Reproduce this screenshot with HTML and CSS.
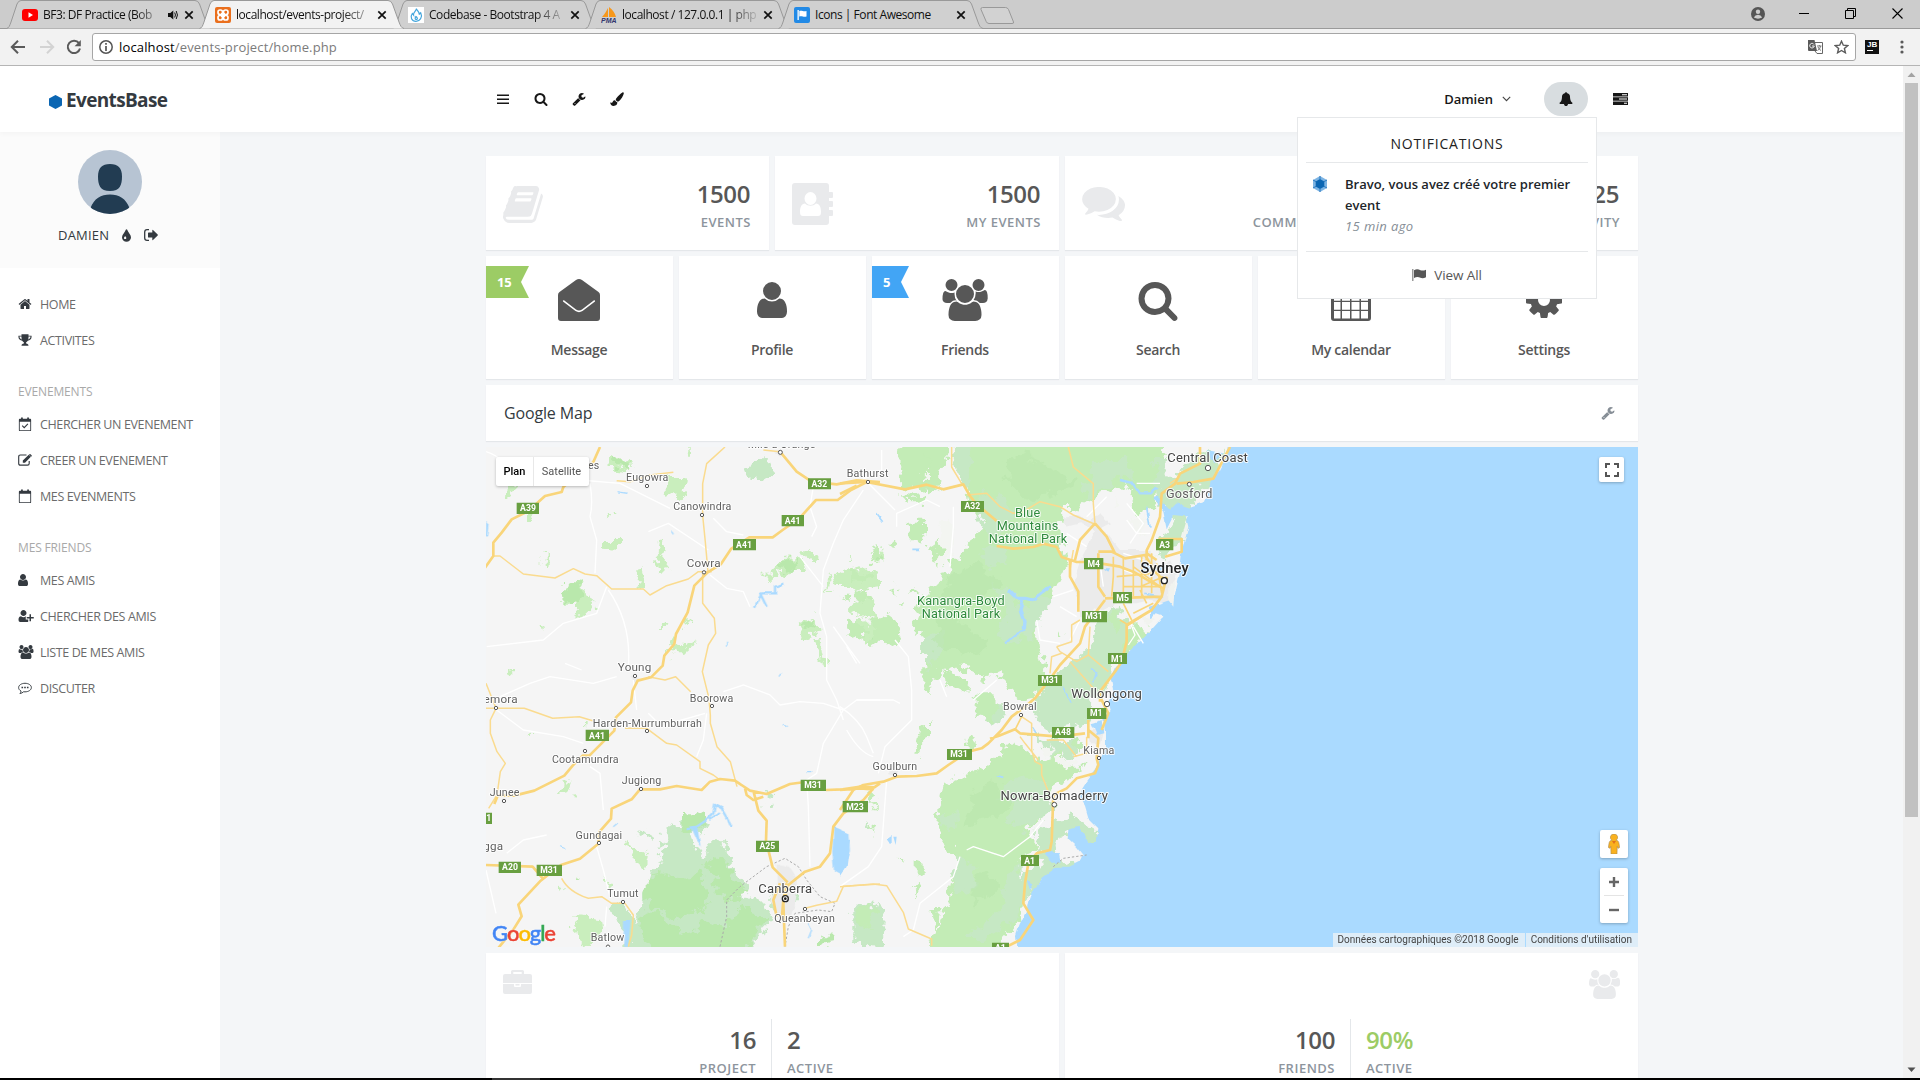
FILE: index.html
```html
<!DOCTYPE html>
<html lang="fr">
<head>
<meta charset="utf-8">
<title>EventsBase</title>
<link rel="stylesheet" href="styles.css">
</head>
<body>
<svg class="sprite" aria-hidden="true">
  <symbol id="bars" viewBox="0 0 1792 1792"><path d="M128 320h1536v192H128zM128 832h1536v192H128zM128 1344h1536v192H128z"/></symbol>
  <symbol id="search" viewBox="0 0 1792 1792"><path d="M1216 832q0-185-131.500-316.500t-316.500-131.500-316.500 131.500-131.500 316.500 131.500 316.500 316.500 131.500 316.500-131.500 131.500-316.500zm512 832q0 52-38 90t-90 38q-54 0-90-38l-343-342q-179 124-399 124-143 0-273.500-55.500t-225-150-150-225-55.500-273.500 55.500-273.500 150-225 225-150 273.500-55.500 273.500 55.500 225 150 150 225 55.500 273.500q0 220-124 399l343 343q37 37 37 90z"/></symbol>
  <symbol id="wrench" viewBox="0 0 1792 1792"><path d="M448 1472q0-26-19-45t-45-19-45 19-19 45 19 45 45 19 45-19 19-45zm644-420l-682 682q-37 37-90 37-52 0-91-37l-106-108q-38-36-38-90 0-53 38-91l681-681q39 98 114.500 173.500t173.500 114.500zm634-435q0 39-23 106-47 134-164.500 217.500t-258.500 83.500q-185 0-316.500-131.500t-131.500-316.500 131.500-316.500 316.500-131.500q58 0 121.500 16.500t107.500 46.500q16 11 16 28t-16 28l-293 169v224l193 107q5-3 79-48.500t135.500-81 70.500-35.500q15 0 23.500 10t8.500 25z"/></symbol>
  <symbol id="brush" viewBox="0 0 16 16"><path d="M14.200 .5c.9-.5 1.800.3 1.500 1.400-.7 2.600-2.800 5.800-4.900 8.200-.8.900-1.500 1.100-2.400.8-.9-.4-1.600-1.200-1.800-2-.1-.7.200-1.200.7-1.900C9.300 4.500 12 1.600 14.200.5zM5.900 9.500c.4 1.200 1.200 2 2.500 2.300.1 2.700-1.600 4.100-4.200 4.100-2.400 0-3.900-1.500-4-4.200 2 1.300 2.500.300 3.100-.9.500-1 1.400-1.500 2.600-1.300z"/></symbol>
  <symbol id="bell" viewBox="0 0 1792 1792"><path d="M1728 1408q0 52-38 90t-90 38h-448q0 106-75 181t-181 75-181-75-75-181h-448q-52 0-90-38t-38-90q50-42 91-88t85-119.500 74.500-158.500 50-206 19.500-260q0-152 117-282.500t307-158.500q-8-19-8-39 0-40 28-68t68-28 68 28 28 68q0 20-8 39 190 28 307 158.500t117 282.500q0 139 19.500 260t50 206 74.500 158.500 85 119.500 91 88z"/></symbol>
  <symbol id="tasks" viewBox="0 0 15 12"><path fill-rule="evenodd" d="M0 0h15v3.400H0zM0 4.300h15v3.400H0zM0 8.600h15V12H0zM9 1.200v1h5v-1zM6 5.500v1h8v-1zM11 9.800v1h3v-1z"/></symbol>
  <symbol id="home" viewBox="0 0 1792 1792"><path d="M1472 992v480q0 26-19 45t-45 19h-384v-384h-256v384h-384q-26 0-45-19t-19-45v-480l1-6 575-474 575 474q1 2 1 6zm223-69l-62 74q-8 9-21 11h-3q-13 0-21-7l-692-577-692 577q-12 8-24 7-13-2-21-11l-62-74q-8-10-7-23.500t11-21.500l719-599q32-26 76-26t76 26l244 204v-195q0-14 9-23t23-9h192q14 0 23 9t9 23v408l219 182q10 8 11 21.500t-7 23.500z"/></symbol>
  <symbol id="trophy" viewBox="0 0 16 16"><path fill-rule="evenodd" d="M4 1.500h8V3h3.500v1.500c0 2.300-2 4-4.300 4.300-.6.800-1.300 1.400-1.900 1.700v1.500c1.700.2 2.700 1 2.700 2.500H4c0-1.500 1-2.300 2.700-2.500v-1.500c-.6-.3-1.300-.9-1.900-1.700C2.500 8.500.5 6.800.5 4.500V3H4zM1.700 4.100c0 1.600 1 2.700 2.600 3.300A9 9 0 0 1 4 4.100zm12.600 0H12a9 9 0 0 1-.3 3.300c1.600-.6 2.600-1.700 2.600-3.300z"/></symbol>
  <symbol id="cal" viewBox="0 0 16 16"><path fill-rule="evenodd" d="M2 2h1.500V.6h2V2h5V.6h2V2H14q1 0 1 1v12q0 1-1 1H2q-1 0-1-1V3q0-1 1-1zm0 3.500V15h12V5.500z"/></symbol>
  <symbol id="calcheck" viewBox="0 0 16 16"><use href="#cal"/><path d="M4.800 9.800l2.300 2.300 4.200-4.300" fill="none" stroke="currentColor" stroke-width="1.300"/></symbol>
  <symbol id="edit" viewBox="0 0 16 16"><path d="M12.800 9v3q0 1.900-1.900 1.900H2.700Q.8 13.900.8 12V4.200q0-1.900 1.900-1.900h7" fill="none" stroke="currentColor" stroke-width="1.300"/><path d="M5.500 8.600l6.800-6.700 2.400 2.400L8 11H5.500zM13 1.300q.7-.6 1.300 0l1.200 1.200q.6.700 0 1.300l-.400.400-2.500-2.500z"/></symbol>
  <symbol id="user" viewBox="0 0 1792 1792"><path d="M1536 1399q0 109-62.500 187t-150.500 78h-854q-88 0-150.500-78t-62.500-187q0-85 8.500-160.500t31.500-152 58.500-131 94-89 134.500-34.500q131 128 313 128t313-128q76 0 134.500 34.500t94 89 58.500 131 31.500 152 8.500 160.500zm-256-887q0 159-112.500 271.500t-271.500 112.500-271.500-112.500-112.500-271.500 112.500-271.500 271.500-112.500 271.500 112.500 112.500 271.500z"/></symbol>
  <symbol id="useradd" viewBox="0 0 2048 1792"><path d="M704 896q-159 0-271.500-112.500T320 512t112.500-271.500T704 128t271.500 112.500T1088 512 975.500 783.500 704 896zm960 128h352v192h-352v352h-192v-352h-352v-192h352V672h192zm-672 320h320v250q-50 70-140 70H280Q64 1664 64 1399q0-479 327-479 131 128 313 128t313-128q30 0 60 8-85 40-85 100z"/></symbol>
  <symbol id="users" viewBox="-64 0 1920 1792"><path d="M529 896q-162 5-265 128h-134q-82 0-138-40.500t-56-118.500q0-353 124-353 6 0 43.500 21t97.500 42.500 119 21.500q67 0 133-23-5 37-5 66 0 159 90 294zm1071 637q0 120-73 189.500t-194 69.500h-874q-121 0-194-69.500t-73-189.500q0-53 3.500-103.500t14-109 26.500-108.500 43-97.500 62-81 85.500-53.500 111.500-20q10 0 43 21.500t73 48 107 48 135 21.500 135-21.500 107-48 73-48 43-21.500q61 0 111.500 20t85.500 53.500 62 81 43 97.500 26.500 108.500 14 109 3.500 103.500zm-1024-1277q0 106-75 181t-181 75-181-75-75-181 75-181 181-75 181 75 75 181zm704 384q0 159-112.500 271.500t-271.500 112.500-271.500-112.500-112.500-271.500 112.500-271.500 271.500-112.500 271.500 112.500 112.500 271.500zm576 225q0 78-56 118.500t-138 40.500h-134q-103-123-265-128 90-135 90-294 0-29-5-66 66 23 133 23 59 0 119-21.500t97.500-42.500 43.500-21q124 0 124 353zm-128-609q0 106-75 181t-181 75-181-75-75-181 75-181 181-75 181 75 75 181z"/></symbol>
  <symbol id="chat" viewBox="0 0 16 16"><path d="M8 2.600c4 0 7.300 2.200 7.300 4.900S12 12.400 8 12.400l-1.600-.1c-1.200 1.200-2.600 1.800-4.200 2 .8-.8 1.200-1.600 1.300-2.800C1.800 10.600.7 9.200.7 7.500.7 4.800 4 2.600 8 2.600z" fill="none" stroke="currentColor" stroke-width="1.100"/><path d="M4 6.700h1.800v1.600H4zM7.100 6.700h1.800v1.600H7.100zM10.200 6.700H12v1.600h-1.800z"/></symbol>
  <symbol id="tint" viewBox="0 0 10 14"><path fill-rule="evenodd" d="M5 0q.6 0 .8.700C6.500 3.500 10 6 10 9a5 5 0 0 1-10 0C0 6 3.500 3.500 4.200.7Q4.400 0 5 0zM2.200 9.700a1.300 1.300 0 1 0 2.600 0c0-.7-.9-1.500-1.300-2.200-.400.700-1.300 1.500-1.300 2.200z"/></symbol>
  <symbol id="signout" viewBox="0 0 14 12"><path d="M5 .700H3Q.7.700.7 3v6q0 2.300 2.300 2.300h2" fill="none" stroke="currentColor" stroke-width="1.300"/><path d="M4 4q0-.6.600-.6h3.700V1.200q0-.8.700-.3l4.700 4.700q.3.400 0 .8L9 11.100q-.7.500-.7-.3V8.600H4.600Q4 8.600 4 8z"/></symbol>
  <symbol id="book" viewBox="64 128 1668 1536"><path d="M1703 478q40 57 18 129l-275 906q-19 64-76.500 107.500t-122.500 43.500h-923q-77 0-148.500-53.500t-99.500-131.500q-24-67-2-127 0-4 3-27t4-37q1-8-3-21.500t-3-19.500q2-11 8-21t16.500-23.500 16.500-23.500q23-38 45-91.500t30-91.500q3-10 .5-30t-.5-28q3-11 17-28t17-23q21-36 42-92t25-90q1-9-2.500-32t.5-28q4-13 22-30.500t22-22.500q19-26 42.500-84.500t27.500-96.500q1-8-3-25.500t-2-26.500q2-8 9-18t18-23 17-21q8-12 16.500-30.500t15-35 16-36 19.500-32 26.500-23.500 36-11.500 47.500 5.500l-1 3q38-9 51-9h761q74 0 114 56t18 130l-274 906q-36 119-71.500 153.500t-128.500 34.500h-869q-27 0-38 15-11 16-1 43 24 70 144 70h923q29 0 56-15.500t35-41.500l300-987q7-22 5-57 38 15 59 43zm-1064 2q-4 13 2 22.500t20 9.500h608q13 0 25.500-9.500t16.500-22.500l21-64q4-13-2-22.500t-20-9.500h-608q-13 0-25.500 9.500t-16.500 22.500zm-83 256q-4 13 2 22.500t20 9.500h608q13 0 25.500-9.500t16.500-22.500l21-64q4-13-2-22.500t-20-9.500h-608q-13 0-25.500 9.500t-16.500 22.500z"/></symbol>
  <symbol id="address" viewBox="0 0 41 42"><path fill-rule="evenodd" d="M3 0h31q3 0 3 3v6h3q1 0 1 1v4q0 1-1 1h-3v3h3q1 0 1 1v4q0 1-1 1h-3v3h3q1 0 1 1v4q0 1-1 1h-3v6q0 3-3 3H3q-3 0-3-3V3q0-3 3-3zm15.500 9a6 6.500 0 1 0 .01 13 6 6.500 0 1 0-.01-13zM13 20.500c-3.500 0-5 4-5 8.500 0 3 1 4 3 4h15c2 0 3-1 3-4 0-4.500-1.500-8.500-5-8.500-3 3-8 3-11 0z"/></symbol>
  <symbol id="comments" viewBox="0 256 1792 1408"><path d="M1408 768q0 139-94 257t-256.500 186.500-353.500 68.500q-86 0-176-16-124 88-278 128-36 9-86 16h-3q-11 0-20.500-8t-11.500-21q-1-13 7-25 30-36 70-80t65-111q-124-72-195-177t-71-224q0-139 94-257t256.500-186.500 353.500-68.500 353.500 68.500 256.500 186.500 94 257zm384 256q0 120-71 224.500t-195 176.500q25 67 65 111t70 80q8 12 6 25-3 14-13 22t-22 7q-50-7-86-16-154-40-278-128-90 16-176 16-271 0-472-132 58 4 88 4 161 0 309-45t264-129q125-92 192-212t67-254q0-77-23-152 129 71 204 178t75 230z"/></symbol>
  <symbol id="envelope" viewBox="0 0 42 42"><path fill-rule="evenodd" d="M0 16Q0 14 1.500 13L18 1q3-2 6 0l16.500 12q1.500 1 1.500 3v23q0 3-3 3H3q-3 0-3-3zm5 6.500Q4.500 21 6 21.200L18 30.500q3 2 6 0l12-9.300q1.400-.2 1 1.400L24.500 32q-3.500 2.300-7 0z"/></symbol>
  <symbol id="calendar" viewBox="0 0 40 42"><path fill-rule="evenodd" d="M3 5h4V0h6v5h14V0h6v5h4q3 0 3 3v31q0 3-3 3H3q-3 0-3-3V8q0-3 3-3zm0 10v6.700h6.500V15zm8 0v6.700h8V15zm9.500 0v6.700h8V15zm9.500 0v6.700h7V15zM3 23v7.700h6.500V23zm8 0v7.700h8V23zm9.500 0v7.700h8V23zm9.500 0v7.700h7V23zM3 32v7.500h6.500V32zm8 0v7.500h8V32zm9.500 0v7.500h8V32zm9.500 0v7.500h7V32z"/></symbol>
  <symbol id="cog" viewBox="0 0 1792 1792"><path d="M1152 896q0-106-75-181t-181-75-181 75-75 181 75 181 181 75 181-75 75-181zm512-109v222q0 12-8 23t-20 13l-185 28q-19 54-39 91 35 50 107 138 10 12 10 25t-9 23q-27 37-99 108t-94 71q-12 0-26-9l-138-108q-44 23-91 38-16 136-29 186-7 28-36 28h-222q-14 0-24.500-8.500t-11.500-21.500l-28-184q-49-16-90-37l-141 107q-10 9-25 9-14 0-25-11-126-114-165-168-7-10-7-23 0-12 8-23 15-21 51-66.500t54-70.500q-27-50-41-99l-183-27q-13-2-21-12.500t-8-23.500v-222q0-12 8-23t19-13l186-28q14-46 39-92-40-57-107-138-10-12-10-24 0-10 9-23 26-36 98.500-107.500t94.500-71.500q13 0 26 10l138 107q44-23 91-38 16-136 29-186 7-28 36-28h222q14 0 24.500 8.500t11.500 21.500l28 184q49 16 90 37l142-107q9-9 24-9 13 0 25 10 129 119 165 170 7 8 7 22 0 12-8 23-15 21-51 66.500t-54 70.500q26 50 41 98l183 28q13 2 21 12.500t8 23.500z"/></symbol>
  <symbol id="briefcase" viewBox="0 0 29 24"><path fill-rule="evenodd" d="M8 4V1.500Q8 0 9.500 0h10Q21 0 21 1.500V4h6q2 0 2 2v7H0V6q0-2 2-2zm2.300 0h8.400V2h-8.400zM0 14h11v2q0 1 1 1h5q1 0 1-1v-2h11v8q0 2-2 2H2q-2 0-2-2zm12.500 0h4v1.500h-4z"/></symbol>
  <symbol id="flag" viewBox="0 0 14 12"><path opacity=".6" d="M0 0h1.500v12H0z"/><path d="M2 1.200C4.500-.2 6.500.3 8.500 1.200c1.800.8 3.500.3 5.500-.5v7.500c-2 1-3.700 1.400-5.500.6C6.500 7.900 4.500 7.600 2 9z"/></symbol>
  <symbol id="close" viewBox="0 0 10 10"><path d="M1.300 1.300l7.400 7.400M8.700 1.300L1.300 8.700" fill="none" stroke="currentColor" stroke-width="1.700"/></symbol>
  <symbol id="tabshape" viewBox="0 0 206 29"><path d="M.5 28.500C3 28 3.500 26 5 22L11 4Q12.500.5 15 .5h174q3 0 4.500 3.500l6.500 18c1.500 4 2.500 6 5 6.500"/></symbol>
</svg>

<header class="browser">
  <div class="tabs">
    <div class="tab"><svg class="shape"><use href="#tabshape"/></svg>
      <svg class="fav" viewBox="0 0 16 16"><rect y="2" width="16" height="12" rx="3" fill="#f00"/><path d="M6.500 5.300v5.400L11 8z" fill="#fff"/></svg>
      <span class="tab-title short fade">BF3: DF Practice (Bob</span>
      <svg class="speaker" viewBox="0 0 10 10"><path d="M0 3h2.300L5.300.5v9L2.300 7H0z"/><path d="M6.700 2.500q1.500 2.500 0 5M8.200 1q2.500 4 0 8" fill="none" stroke="#111"/></svg>
      <svg class="x"><use href="#close"/></svg></div>
    <div class="tab active"><svg class="shape"><use href="#tabshape"/></svg>
      <svg class="fav" viewBox="0 0 16 16"><rect width="16" height="16" rx="2" fill="#ea6f1d"/><rect x="3" y="3" width="4.500" height="4.500" rx="2" fill="none" stroke="#fff" stroke-width="1.700"/><rect x="8.500" y="3" width="4.500" height="4.500" rx="2" fill="none" stroke="#fff" stroke-width="1.700"/><rect x="3" y="8.500" width="4.500" height="4.500" rx="2" fill="none" stroke="#fff" stroke-width="1.700"/><rect x="8.500" y="8.500" width="4.500" height="4.500" rx="2" fill="none" stroke="#fff" stroke-width="1.700"/><path d="M6 6h4v4H6z" fill="#fff"/></svg>
      <span class="tab-title fade">localhost/events-project/</span>
      <svg class="x"><use href="#close"/></svg></div>
    <div class="tab"><svg class="shape"><use href="#tabshape"/></svg>
      <svg class="fav" viewBox="0 0 16 16"><path fill="#fff" d="M0 0h16v16H0z"/><path d="M8.500 1.500c.5 3 3.500 3 2.500 6l1.700-1.700c2 4-.4 8.500-4.700 8.500S1.700 10 4.300 6.500L5.500 8C5 5 8.500 4 8.500 1.500zM8 9.500c-1 1-1.300 3 .3 3s1.200-2-.3-3z" fill="none" stroke="#42a5dc" stroke-width="1.200"/></svg>
      <span class="tab-title fade">Codebase - Bootstrap 4 A</span>
      <svg class="x"><use href="#close"/></svg></div>
    <div class="tab"><svg class="shape"><use href="#tabshape"/></svg>
      <svg class="fav" viewBox="0 0 16 16"><path d="M7 1v9H1c2-2 4-5 6-9zM8 0c4 3 6 6 7 10H8z" fill="#f7981c"/><text x="0" y="15.500" class="pma">PMA</text></svg>
      <span class="tab-title fade">localhost / 127.0.0.1 | php</span>
      <svg class="x"><use href="#close"/></svg></div>
    <div class="tab"><svg class="shape"><use href="#tabshape"/></svg>
      <svg class="fav" viewBox="0 0 16 16"><rect width="16" height="16" rx="2" fill="#228ae6"/><path d="M3.500 3h1.300v10H3.500zM5.300 4c3-1 4 1.200 7.200 0v5.500c-3.200 1-4.200-1-7.200 0z" fill="#fff"/></svg>
      <span class="tab-title">Icons | Font Awesome</span>
      <svg class="x"><use href="#close"/></svg></div>
    <svg class="newtab" viewBox="0 0 36 18"><path d="M2.500.5h23q2 0 3 2l5 12.500q.6 1.500-1.500 1.500H9q-2 0-2.800-2L1 2.500Q.5.500 2.500.5z"/></svg>
    <div class="winctl">
      <svg width="14" height="14" viewBox="0 0 14 14"><circle cx="7" cy="7" r="7" fill="#555"/><circle cx="7" cy="4.700" r="2.200" fill="#ccc"/><path d="M2.800 10.500q1.200-2.700 4.200-2.700t4.200 2.700q-4.200 2.300-8.400 0z" fill="#ccc"/></svg>
      <svg width="10" height="11" viewBox="0 0 10 11"><path d="M0 5.500h10" stroke="#000"/></svg>
      <svg width="11" height="11" viewBox="0 0 11 11"><path d="M.5 2.500h8v8h-8zM2.500 2.500v-2h8v8h-2" fill="none" stroke="#000"/></svg>
      <svg width="11" height="11" viewBox="0 0 11 11"><path d="M.5.500l10 10M10.500.500l-10 10" stroke="#000" stroke-width="1.100"/></svg>
    </div>
  </div>
  <div class="toolbar">
    <svg class="tb" viewBox="0 0 16 16"><path d="M15 8H2.500M8 1.800L1.800 8 8 14.200" fill="none" stroke="#5a5a5a" stroke-width="2"/></svg>
    <svg class="tb" viewBox="0 0 16 16"><path d="M1 8h12.500M8 1.800L14.200 8 8 14.200" fill="none" stroke="#d3d3d3" stroke-width="2"/></svg>
    <svg class="tb" viewBox="0 0 16 16"><path d="M13 4.200A6.200 6.200 0 1 0 14 9.500" fill="none" stroke="#5a5a5a" stroke-width="2"/><path d="M14.800 1v6.200H8.600z" fill="#5a5a5a"/></svg>
    <div class="omnibox">
      <svg width="14" height="14" viewBox="0 0 14 14"><circle cx="7" cy="7" r="6.200" fill="none" stroke="#555" stroke-width="1.500"/><path d="M7 3v1.700M7 6v5" stroke="#555" stroke-width="1.700"/></svg>
      <span class="url">localhost<i>/events-project/home.php</i></span>
      <svg width="15" height="14" viewBox="0 0 15 14"><path d="M7 2.500h7.500v11H9L7 11" fill="none" stroke="#666"/><path d="M0 0h6.500L9 11H1q-1 0-1-1z" fill="#5a5a5a"/><path d="M6 4.500A2.300 2.300 0 1 0 6.300 6H4" stroke="#eee" fill="none"/><path d="M9 6h4.500M11.300 5v1M9.500 10.500q3-1.500 3-4.500M10 7q1 2.500 3 3.500" stroke="#777" fill="none"/></svg>
      <svg width="15" height="14" viewBox="0 0 15 14"><path d="M7.500 1.200l1.800 4 4.400.4-3.300 2.900 1 4.300-3.900-2.300-3.900 2.300 1-4.300L1.300 5.600l4.400-.4z" fill="none" stroke="#5a5a5a" stroke-width="1.400"/></svg>
    </div>
    <div class="jb"><span>JB</span></div>
    <svg class="dots" width="4" height="14" viewBox="0 0 4 14"><circle cx="2" cy="2" r="1.600"/><circle cx="2" cy="7" r="1.600"/><circle cx="2" cy="12" r="1.600"/></svg>
  </div>
</header>

<div class="viewport">
  <div class="page">
    <header class="top">
      <a class="brand"><svg width="13" height="14" viewBox="0 0 13 14"><path d="M6.500 0L13 3.400v7.200L6.500 14 0 10.600V3.400z" fill="#0b66b3"/></svg><span>EventsBase</span></a>
      <div class="top-inner">
        <nav class="tools">
          <svg class="ic"><use href="#bars"/></svg><svg class="ic"><use href="#search"/></svg><svg class="ic"><use href="#wrench"/></svg><svg class="ic"><use href="#brush"/></svg>
        </nav>
        <nav class="account">
          <span class="who">Damien</span>
          <svg class="chev" viewBox="0 0 9 6"><path d="M.8.800l3.700 3.900L8.200.8" fill="none" stroke="#444" stroke-width="1.100"/></svg>
          <span class="bell"><svg class="ic"><use href="#bell"/></svg></span>
          <svg class="tasks"><use href="#tasks"/></svg>
          <div class="menu">
            <h5>NOTIFICATIONS</h5>
            <div class="note">
              <svg width="14" height="16" viewBox="0 0 14 16"><path d="M7 0l7 4v8l-7 4-7-4V4z" fill="#7db4e3"/><path d="M7 3l4.300 2.500v5L7 13l-4.300-2.500v-5z" fill="#0b66b3"/><path d="M7 0v3M0 4l3 1.600M14 4l-3 1.600M0 12l3-1.600M14 12l-3-1.600M7 16v-3" stroke="#2a79c0"/></svg>
              <div><p>Bravo, vous avez créé votre premier event</p><em>15 min ago</em></div>
            </div>
            <a class="viewall"><svg width="14" height="12"><use href="#flag"/></svg>View All</a>
          </div>
        </nav>
      </div>
    </header>
    <div class="body">
      <aside class="side">
        <div class="me">
          <svg width="64" height="64" viewBox="0 0 64 64"><clipPath id="round"><circle cx="32" cy="32" r="32"/></clipPath><g clip-path="url(#round)"><path fill="#b7c4d3" d="M0 0h64v64H0z"/><path d="M32 14c8 0 12 4 12 12.500S42 41 32 41s-12-6-12-14.500S24 14 32 14zM32 44.500c9 0 16 4 19.500 13.500V66h-39v-8C16 48.500 23 44.500 32 44.500z" fill="#223c52"/></g></svg>
          <div class="me-row"><span>DAMIEN</span><svg class="drop"><use href="#tint"/></svg><svg class="out"><use href="#signout"/></svg></div>
        </div>
        <nav class="nav">
          <a><svg><use href="#home"/></svg>HOME</a>
          <a><svg><use href="#trophy"/></svg>ACTIVITES</a>
          <h6>EVENEMENTS</h6>
          <a><svg><use href="#calcheck"/></svg>CHERCHER UN EVENEMENT</a>
          <a><svg><use href="#edit"/></svg>CREER UN EVENEMENT</a>
          <a><svg><use href="#cal"/></svg>MES EVENMENTS</a>
          <h6>MES FRIENDS</h6>
          <a><svg class="solo"><use href="#user"/></svg>MES AMIS</a>
          <a><svg class="wide"><use href="#useradd"/></svg>CHERCHER DES AMIS</a>
          <a><svg class="wide"><use href="#users"/></svg>LISTE DE MES AMIS</a>
          <a><svg><use href="#chat"/></svg>DISCUTER</a>
        </nav>
      </aside>
      <main class="main">
        <section class="stats">
          <div class="card stat"><svg width="40" height="37"><use href="#book"/></svg><div><b>1500</b><span>EVENTS</span></div></div>
          <div class="card stat"><svg width="41" height="42"><use href="#address"/></svg><div><b>1500</b><span>MY EVENTS</span></div></div>
          <div class="card stat"><svg width="43" height="34"><use href="#comments"/></svg><div><b>15</b><span>COMMENTS</span></div></div>
          <div class="card stat"><div><b>25</b><span>ACTIVITY</span></div></div>
        </section>
        <section class="tiles">
          <div class="card tile"><span class="ribbon green">15</span><svg><use href="#envelope"/></svg><p>Message</p></div>
          <div class="card tile"><svg><use href="#user"/></svg><p>Profile</p></div>
          <div class="card tile"><span class="ribbon blue">5</span><svg class="w46"><use href="#users"/></svg><p>Friends</p></div>
          <div class="card tile"><svg><use href="#search"/></svg><p>Search</p></div>
          <div class="card tile"><svg><use href="#calendar"/></svg><p>My calendar</p></div>
          <div class="card tile"><svg><use href="#cog"/></svg><p>Settings</p></div>
        </section>
        <section class="card map-head"><h3>Google Map</h3><svg><use href="#wrench"/></svg></section>
        <section class="map">
<svg class="map-art" width="1152" height="500" viewBox="0 0 1152 500">
<defs>
<filter id="rough" x="-5%" y="-5%" width="110%" height="110%"><feTurbulence type="fractalNoise" baseFrequency=".09" numOctaves="4" seed="4"/><feDisplacementMap in="SourceGraphic" scale="20" xChannelSelector="R" yChannelSelector="G"/></filter>
<filter id="wobble" x="-5%" y="-5%" width="110%" height="110%"><feTurbulence type="fractalNoise" baseFrequency=".09" numOctaves="2" seed="9"/><feDisplacementMap in="SourceGraphic" scale="5" xChannelSelector="R" yChannelSelector="G"/></filter>
</defs>
<path fill="#f5f5f5" d="M0 0h1152v500H0z"/>
<!-- forests and parks -->
<g filter="url(#rough)">
<g transform="scale(.33333) translate(-18 -21)">
<g fill="#c9eebd">
<path d="M390 55l50 0 8 45-35-5-25-18zM620 25h22v28h-20zM560 105l60 0 0 40-25 30-35-10zM80 145l20-5 0 28-22 0zM135 215h22v20h-22zM380 215l22 15-20 8zM378 300l36 0 0 32-36-3zM188 345h12v32h-12zM540 305l16 0-8 60 20 25-30 4-5-50zM490 375l10 40-10 20-25-30zM248 440l50-10 20 45 35 20-10 28-50-3-10-40-30 10zM185 560l15-10 0 15-15 5zM535 545l30 0-5 25-20 0zM580 595l30 20 40-15-15 20-35 10-35 20zM610 540l15-10-5 30zM135 880l15-6 0 15zM315 840h14v16h-14zM245 1020l30 5-5 40-30-5zM1040 415l15 0-10 45zM1000 600l30 0 10 70-25-15zM80 690h22v10H85z"/>
<path d="M860 380l40 0-10 30-30 0zM900 355l60-5 15 40-40 0-15 15-20-5zM975 340l40 0 0 25-30-5zM1160 340l50-10 0 40-40-5zM1065 410l45-25 40-5 50 30 0 35-60 5-30-15-40 0zM1120 490l60-10 20 60-60-10-30-15zM1130 540l20 40 10 30 20-20 20 10-5-50zM955 555l45-30 10 55-40 20zM1095 360l12-15 0 15zM440 1210l60 35-10 40-30-30zM280 1430l80 10 10 50-70 30-10-50zM370 1320l15 10-5 15zM225 1330l25 10-5 15-20-5zM285 1298l15 5-8 8z"/>
</g>
<path fill="#b9e8ac" d="M395 52l45 10 5 25-30 0zM250 440l45-8 10 35-15 20-35 0zM900 360l55-5-10 30-25 10zM1165 340l40 0 0 20-35 5zM960 560l35-25 10 35zM285 1300l18 4-10 8zM1170 590l25 0 0 25z"/>
<path fill="#c6e8c4" d="M800 75l40-25 35 25 0 35-25 20-35-15zM560 1170l50-30 50-20 30 40-60 20 10 50-60 20-30-30zM475 1180l40 5-5 20zM400 1400l30-20 30 60 30-50 30-100 50-80 70 0 40 60 60 0 60 60-20 60-60 40-60 80 0 1 20 0 0 30-230 0zM680 1210l60 0 20 50-20 20 20 60 70 40 40 20-20 80-40 60-150 0-10-100 40-60-10-60-40-50 40-30zM1120 1410l80-20 0 130-80-20zM860 1050l30 20-30 20zM870 1350l60-5 20 50-60 20zM1160 1130l15 40-20 0z"/>
<path fill="#b9e8ac" d="M600 1120l60 0 20 30-50 20-30-10zM500 1320l50-20 60 10 50-10 30 60-20 50-70 30-60-30-40-20zM470 1430l60-20 60 60 40 10 40-40 60 20 60-60 60 40-30 80-60 30-240 0zM700 1250l40 10 20 60 40 30-30 40-60-20 0-50-30-30zM1020 1500l40-20 0 35-40 5z"/>
</g>
<g transform="scale(.33333) translate(1062 -21)">
<path fill="#c3ecb6" d="M185 0l140 0 0 60-30 30 0 50-110 10-5-60zM340 0l620 0 25 30-25 60-10 100-50 30-30-70-20-20-60 30-50 20-40 30-35 0-5 40 5 70 25 40-25 40-25 50-40 70-10 40 10 80 20 80-30 50-50 5-40-35-30-40-40 20-50-30-40-10-40 10-35 70-15-20 0-140-25-40 15-80 40-40 50-40 10-40 60-60 40-60-40-30-10-50-10-70-30-10z"/>
<path fill="#c6e8c4" d="M335 0l45 0 15 70-15 80-35-70zM430 160l40 0 60 70-60 60-30-20-30-60zM760 60l90 0 40 60-50-10-50 40-60 20zM450 430l60 20 60 90-40 70-60-20 30-60-20-60zM570 480l60-20-20 60-30 80-40-20zM250 590l60-20 20 40-60 80-20-20zM420 330l60-10 20 40-60 20zM940 60l40 0 0 60 60-50 40-30 70 0-20 60-20 30-40 40-30 60 30 30-10 40-60 20-30 50-20-40 50-100-40-40z"/>
<path fill="#c6e8c4" d="M770 530l60-30 40 60-15 80-25 50-30 50-40 30-20 80-100 20-50-20 10-90 50-60 50-30 50-50z"/>
<path fill="#c3ecb6" d="M870 560l82 5-82 75-20 0zM800 530l30-20 20 40-20 30zM520 900l40 30 40 30 50-20 50 40 40 0-60 40-60 40-5 60-50 60 30 50-50 20-15 100 25 60-70 90-20 60-210 0 60-150 20-80 20-70-70-90 30-140 110-40z"/>
<path fill="#c6e8c4" d="M540 1000l80 30 20 70-80 70-60-20 30-60-60-20zM300 1130l50-10 0 40-50-5zM350 1240l60 40-10 60-60 30zM690 1120l50 40 35 20-6 36-30 5-35-36-46 10-10 60 50 10 30 10-8 20-50 20-60 0-50 60-20 0 10-80 50-10-10-110zM500 1300l45-20 0 60 20 50-60 60-70 50-60 0 60-60 50-40zM60 1410l60-30 20 90-60 60-20 0zM450 790l50 0-10 60-60-10zM560 880l60 20 100 0-20 50-70 0z"/>
<path fill="#c3ecb6" d="M180 165l60 10 20-5-10 20-50-5zM200 245l55 0 0 50-45 0zM85 330l25-15 5 45-25 10zM140 305l30 0-10 20zM30 385l60 20 0 20-60-5zM50 450l40 10-5 30-35-10zM10 540l50 10 20 30-60 20zM90 540l50-15 40 30-10 60-70-5zM210 460l20-15 5 30zM150 450l15-10 5 30zM410 760l60 0-10 80-50-10zM380 890l30 5 0 30-30 0zM240 870l30-20 0 40-30 60-20 0zM80 1060l25 0-5 40zM230 1270l30 10 0 30-30-10zM45 1420l60-30-10 60-40 10zM165 1255l20-5 5 25zM215 1350l20-20 0 40zM90 1150l10 0 0 40zM700 910l25-10 10 20-20 20zM270 1410l30 0-10 60zM270 320l30-20 10 20-10 60zM655 585l12-15 3 15zM300 690l50 10 50 40-20 20-60-30zM180 490l14-10 0 25zM5 470l20-10 5 20zM265 50l30 20 10 80-40 20z"/>
<path fill="#b9e6ab" opacity=".6" d="M500 60l60-20 90 60 70 20-60 30-100 30-60-60zM340 400l70-30 80 60-60 40-80 40-60-10zM300 520l80 40 70 60-60 20-110-20zM400 1060l60-30 60 50-60 60-90 20zM380 1340l60-40 50 40-80 60z"/>
<path fill="#f3f5f1" d="M300 240l40 10 0 60-20 60-25-10 10-60zM255 90l15 0 0 30-18 0zM870 230l40 0 0 60-30-20zM820 170l20 30-20 20zM600 910l40 10 0 20-40 0zM650 960l60 0 0 15-50 5z"/>
</g>
</g>
<!-- built-up areas -->
<g fill="#ebebeb" filter="url(#wobble)"><g transform="scale(.33333) translate(1062 -21)">
<path d="M770 260l30 20 40 50 90 0 30 60 30-30 20 40-20 90-60-10-40 10-60 0-40 20-60-10-30-60 20-80zM700 440l60-20 20 60-50 30zM720 480l50 0-20 60-30-10zM670 230l40-5 40 15 30-20 30 30-40 20-50-20-40 10zM740 870l50 0-10 40-30 0z"/><path d="M145 975l30 0 0 30-30-5z"/></g>
<g transform="scale(.33333) translate(-18 -21)"><path d="M890 1270l40 10 20 30 0 60-20 60-40-10-20-40 20-40zM450 705l30 10-10 25zM885 35l25 5-10 15z"/></g></g>
<!-- ocean, bays and lakes -->
<g fill="#aadaff" filter="url(#wobble)">
<g transform="scale(.33333) translate(1062 -21)">
<path d="M1170 0l-10 50-20 40-20 20-10 35-15 40-45 15-8 40-2 35-14 60-6 60-15 70-15 50-25 20-13 15-32 35-40 40-30 30-25 30-13 30 8 40-15 30 7 28-22 22 5 40 0 50-25 60-30 40-25 40 20 35 10 35 30 30-5 40-25 5-12-30-15-20-30 10-2 30 22 20 20 25-10 20-30 15-40 0-40 30-10 20-20 20-10 25-10 40-20 40-10 30 5 50h1900V0z"/>
<path d="M950 170l40 40 20-20 60 20-20 20-50-5-20 40-10-50-30-40zM1100 30l50 10-30 30zM930 500l60-20 10 20-20 30-30-10-20 20zM900 360l30 20 50 0-10 10-60 0zM755 850l30-10 5 40-20 5zM620 1235l40 5 5 25-30 0-20-20zM560 1320l20 10-10 20zM0 1190l30 10-10 80-20 30zM140 1195l15-10 0 30zM160 1190l10 0-3 25zM790 385l20 0-5 10z"/>
<path fill="none" stroke="#aadaff" stroke-width="10" d="M505 450l25 25 30 0 20 5 50-40M548 480l-8 30 12 35-2 20"/>
<path fill="none" stroke="#aadaff" stroke-width="7" d="M555 565l-35 25-25 20M840 120l40 10 20 30 30 0 20-20"/>
<path fill="none" stroke="#aadaff" stroke-width="5" d="M750 685l20 15-10 30M670 740l20 50M110 220l18 22M217 328h22M580 865l10 15M470 1010l20 5M970 470l-60-10M920 200l10 60"/>
</g>
<g transform="scale(.33333) translate(-18 -21)">
<path d="M18 245l8 5-4 40-6 5zM1060 1160l45 20 5 50-30 75-18-10-5-60zM432 1440l20 0-8 80-14 0zM635 1165l20-5 10 60-15-20z"/>
<path fill="none" stroke="#aadaff" stroke-width="7" d="M825 500l20-40 40 0 0-20 25-10M840 460l20 40M620 1165l30-5 30-20 20-20 5-25 20 10 20 35 10 25M690 1140l30-20"/>
<path fill="none" stroke="#aadaff" stroke-width="4" d="M410 155l35 5M575 275l5 8M905 695l-8 12M740 605v12M238 1220l15 5M980 998h14M912 856l8 4M400 1160l12-10M985 1450l10 20-10 25"/>
</g></g>
<!-- headlands lying off the coast -->
<g fill="#f1f3ef" filter="url(#wobble)"><path transform="scale(.33333) translate(1062 -21)" d="M1040 240l5 20-10 40-12 0zM985 440l20-20-5 80-15-20zM900 530l50 10-30 15z"/></g>
<!-- local roads -->
<g fill="none" stroke="#fff" stroke-width="4" stroke-linejoin="round">
<g transform="scale(.33333) translate(-18 -21)">
<path d="M18 35q60 20 70 70M330 130q10 60 0 100l20 70-5 100M300 120l120 10 60 30 60 30 30 15M700 235l40 40 50 10M505 275l60-25 120 80M690 405l50 40 50 10 20 45M380 440l-30 80-100 30-60 50-170 20M385 450q70 100 60 230M60 770l90-40 60-20 130 20 70-20M255 670l50 20M460 720l10 90M505 820l40 40 60-20 70-20M50 810l80 60 120 20 60 20M330 980l30 20 10 110M680 820l-10 80-20 50M1200 780h-70l-40 30-60-20-70-5-60 10-30-30-80-30-60 20M1090 810l-60 100-20 90-30 20 5 80 5 180M1100 870q40 70 80 80M1000 140l-10 60 20 60-15 30M1150 150l-60 90-30 70-30 80-10 130 20 70 0 130 30 60 20 60M1060 560l50 70 30 40M960 350l70 90M18 1290l30 130M80 1240l50-40 70-15M350 1220l20 70 20 80M380 1400l-5 60"/>
</g>
<g transform="scale(.33333) translate(1062 -21)">
<path d="M85 130l80 80M125 30v60l-60 30M300 200l-40-20-90 40 0 40M340 200l0 60-10 120M165 600l40 50 10 100 0 90-80 80-20 80M50 780h110l20 10M0 800q60 40 80 90l20 50M20 620l30 50M140 1020l-15 200-40 60-85 60M300 720l20 50M380 1230l20-10 90 30 80-60 40-50M860 190l50 60-40 60M800 170l-60 60M720 540l-30 60M470 720l-70 60M880 560l30 50M590 540l10 60 60 10M360 1250l-20 60-100 80-20 80-30 20M960 130l-70 0M870 545l15 40-20 30"/>
<path d="M860 240l30 40 40 0M680 280l60 40M640 470l60-20M660 500l50 30M850 340l60 20M930 420l-80-30M790 440l-10-70"/>
</g></g>
<g fill="none" stroke="#aaa" stroke-width="3" stroke-dasharray="7 6"><path transform="scale(.33333) translate(-18 -21)" d="M720 1520l20-90 0-50 40-40 80-60 55-25 40 25 25 40 40 50 45 20-10 25-40-5-70 10-20 40-10 60"/><path transform="scale(.33333) translate(1062 -21)" d="M640 1280l30-25 70-10"/></g>
<!-- secondary roads -->
<g fill="none" stroke="#fadb8f" stroke-width="4.500" stroke-linejoin="round">
<g transform="scale(.33333) translate(-18 -21)">
<path d="M735 21l-55 50-12 60 0 95 8 80 8 90M40 348h20l70 54 95 12 55-28 35 16 35 5 45 40 95 0 20 18 50-28 65-20 30-22h40M668 400l0 90 35 45 4 45-22 35-18 80 20 80 4 50 0 25 20 70 40 45 20 75M505 710l50 10 32-10 45 45M18 805h115l85 30 80-5 40 12M435 865h65l60 45 30 5 70 50 0 20 40 20 20 15M18 730l30 75-17 35 0 40 20 55 25 35-15 25-10 70-25 40M245 1315q20 40 80 60l40-5 30 20 40 0 25 35-5 60-10 35M410 122l40 3 60-20 70-8M1200 1332l-110 7-20 45-60 12-40 10M850 30l50 5"/>
</g>
<g transform="scale(.33333) translate(1062 -21)">
<path d="M685 21l15 60 60 50 0 60 5 60M335 21l0 60 30 50M380 165l60-5 40 40 40 20 30-5 50-30 60 15 40 25 70 30M700 330l-10 60M720 540l-25 15 0 50-45 15M750 560l-5 85 60 50M650 620l10 15 50 30 35-20M690 665l70 80M630 700l5-50 30-10M545 830l30 20 0 80 10 35 20 10 0 30 20 50M540 890l15 20 40 50M620 900l50 0 40 50M0 1340l100-8 40 5 50 80 15 50 70 30 0 20M740 890l0 50-40 10M1020 110l-30 20"/>
</g></g>
<!-- highways -->
<g fill="none" stroke="#f9d57a" stroke-width="8" stroke-linejoin="round">
<g transform="scale(.33333) translate(-18 -21)">
<path d="M360 21l-20 45-90 75-5 15-50 12-50 45-50 25-30 40-25 30 0 40-25 35M900 35l50 60 45 30 75 8 60-12 70 5M1163 125l-50 25-40 30h-65l-50 55-50 35-30 22h-70l-55 35-30 45-40 25-40 40-20 80-35 65-5 30-30 35-5 30-35 35-40 10-15 30-5 35-45 45-5 40-45 45-30 30-20 0-30 30-25 30-90 45-60 15h-50l-10 25M480 1048h60l50-10 75 12 25-25 30-8 45 5 45 30 50 10 70-30 45-6h35M1038 1050l50-2 55-8 40 2 17-12M480 1048l-25 30-60 28-2 30-35 40-3 35-55 45-55 18-40 30-25 20-65 70 10 35-25 40-45 55-5 30M18 1275l140 5 30 35M820 1052l15 60 25 30-2 60 20 80 45 45M1180 1045l-30 35-60 40-30 40-10 80-30 40-45 15-50 40-15 55 5 130M900 1330l-20 50 10 50M920 1330l-10 50-5 60M795 1045l5 20 20 15 30-10"/>
</g>
<g transform="scale(.33333) translate(1062 -21)">
<path d="M0 130l80-4 115 22 65-14 50 14 60-15 20 35 20 25 60 50M470 318l50 8 60-5 30-10 40 10 15 30 45 15 70 0M0 162l50-25M780 370l60 10 40 15 60 35 30 15M1080 21l0 50-60 30-15 30-40 30-5 70-25 70-15 30 0 30M1170 21l-50 95-60 10-50 5M765 250l35 40 25 50M765 250l-45 50-15 60M690 360l0 50 25 45 0 60M775 340l0 100 20 30M775 335l40 0 40 20 60-10 30 50 30 30M975 350l50-15 0-38-70 0M920 340l30 20M795 475l170-5 15-60M795 480l-60 80-15 50-60 65-25 35-50 65-30 25-40 30-30 40-40 40-20 15-40 10-60 40-35 25-60 8-60 2-40 15-60 10-30 15-20 30-20 30M0 1050l60-5 40 3M965 470l-30 40-75 45 0 50-15 60-20 30-45 60 0 30M745 840l0 55M735 880l-80 10-115-10-15-12-50 20-25 8M745 870l30 25-5 60 5 20-10 25-55 15-30 30-40 20-5 140-5 25-40 10-25 30-10 60-5 60 30 50-40 60-40 20-5 50M780 770l25 50-20 50"/>
<path stroke-width="5" d="M820 350v60l-5 60M850 350l0 120M880 360v110M905 350v120M830 410l110-10M850 440l110 0M880 380l80 60M900 440l70-30M850 490l30 60M880 520l60-30M840 540l25 15 40-25M920 490l-20-40M950 370l15 90M935 340l0 120M525 870l20-40"/>
</g></g>
<!-- towns -->
<g fill="#fff" stroke="#555" stroke-width="3">
<g transform="scale(.33333) translate(-18 -21)"><circle cx="901" cy="37" r="6"/><circle cx="501" cy="138" r="5"/><circle cx="666" cy="225" r="5"/><circle cx="672" cy="397" r="5"/><circle cx="465" cy="708" r="5"/><circle cx="48" cy="804" r="5"/><circle cx="696" cy="798" r="5"/><circle cx="501" cy="873" r="5"/><circle cx="315" cy="933" r="5"/><circle cx="483" cy="1047" r="5"/><circle cx="72" cy="1083" r="5"/><circle cx="357" cy="1209" r="5"/><circle cx="429" cy="1386" r="5"/><circle cx="384" cy="1520" r="5"/><circle cx="975" cy="1407" r="5"/><circle cx="916" cy="1376" r="9" stroke="#222" stroke-width="4"/><circle cx="916" cy="1376" r="4" fill="#222" stroke="none"/></g>
<g transform="scale(.33333) translate(1062 -21)"><circle cx="84" cy="126" r="5"/><circle cx="1104" cy="84" r="8"/><circle cx="1048" cy="133" r="6"/><circle cx="973" cy="422" r="9" stroke="#222" stroke-width="4"/><circle cx="801" cy="792" r="8"/><circle cx="543" cy="825" r="5"/><circle cx="777" cy="954" r="5"/><circle cx="643" cy="1094" r="7"/><circle cx="165" cy="1005" r="5"/></g></g>
<!-- road shields -->
<g class="shields"><g transform="scale(.33333) translate(-18 -21)">
<path d="M984 115h69v33h-69zM110 188h67v34h-67zM905 225h67v34h-67zM759 297h69v34h-69zM317 869h70v34h-70zM962 1019h76v34h-76zM1088 1083h76v34h-76zM828 1202h69v34h-69zM56 1265h67v34H56zM170 1274h76v34h-76zM0 1118h36v34H0z"/>
<text x="1018" y="141">A32</text><text x="144" y="214">A39</text><text x="938" y="251">A41</text><text x="792" y="324">A41</text><text x="351" y="896">A41</text><text x="999" y="1045">M31</text><text x="1125" y="1109">M23</text><text x="862" y="1228">A25</text><text x="90" y="1291">A20</text><text x="207" y="1299">M31</text><text x="26" y="1144">1</text></g>
<g transform="scale(.33333) translate(1062 -21)">
<path d="M363 183h69v33h-69zM948 297h52v34h-52zM732 354h58v34h-58zM819 456h57v34h-57zM726 513h75v34h-75zM804 639h57v33h-57zM594 705h72v33h-72zM741 804h58v33h-58zM636 861h67v33h-67zM321 927h75v33h-75zM543 1245h54v33h-54zM456 1508h51v33h-51z"/>
<text x="397" y="208">A32</text><text x="974" y="324">A3</text><text x="761" y="381">M4</text><text x="848" y="482">M5</text><text x="762" y="538">M31</text><text x="832" y="665">M1</text><text x="630" y="730">M31</text><text x="769" y="829">M1</text><text x="669" y="886">A48</text><text x="357" y="952">M31</text><text x="569" y="1271">A1</text><text x="481" y="1533">A1</text></g></g>
<!-- place names -->
<g class="names"><g transform="scale(.33333) translate(-18 -21)">
<text x="905" y="25">Mile a Orange</text><text x="341" y="87">es</text><text x="502" y="122">Eugowra</text><text x="667" y="210">Canowindra</text><text x="671" y="381" class="m">Cowra</text><text x="464" y="693" class="m">Young</text><text x="62" y="789" class="m">emora</text><text x="695" y="785">Boorowa</text><text x="502" y="860">Harden-Murrumburrah</text><text x="316" y="968">Cootamundra</text><text x="485" y="1032">Jugiong</text><text x="74" y="1068">Junee</text><text x="357" y="1196">Gundagai</text><text x="40" y="1230" class="m">gga</text><text x="429" y="1370">Tumut</text><text x="383" y="1502">Batlow</text><text x="974" y="1445">Queanbeyan</text><text x="916" y="1359" class="l">Canberra</text></g>
<g transform="scale(.33333) translate(1062 -21)">
<text x="83" y="111">Bathurst</text><text x="1103" y="66" class="l">Central Coast</text><text x="1048" y="174" class="g">Gosford</text><text x="974" y="398" class="xl">Sydney</text><text x="800" y="773" class="l">Wollongong</text><text x="540" y="810">Bowral</text><text x="777" y="941">Kiama</text><text x="643" y="1080" class="l">Nowra-Bomaderry</text><text x="165" y="989">Goulburn</text>
<g class="park"><text x="563" y="231">Blue</text><text x="563" y="270">Mountains</text><text x="564" y="308">National Park</text><text x="363" y="495">Kanangra-Boyd</text><text x="363" y="533">National Park</text></g></g></g>
</svg>
          <div class="maptype"><b>Plan</b><span>Satellite</span></div>
          <div class="fs"><svg width="14" height="14" viewBox="0 0 14 14"><path d="M1 5V1h4M9 1h4v4M13 9v4H9M5 13H1V9" fill="none" stroke="#555" stroke-width="2"/></svg></div>
          <div class="zoom">
            <div class="peg"><svg width="12" height="20" viewBox="0 0 12 20"><path d="M6 0a3.400 3.400 0 0 1 2 6.300c2 .2 2.700 1.200 3 3.200l.6 4-1.600.8-.8-2L9 20H3l-.2-7.700-.8 2-1.600-.8.600-4c.3-2 1-3 3-3.200A3.400 3.400 0 0 1 6 0z" fill="#f9b11f" stroke="#a98c55" stroke-width=".6"/><path d="M4 7l2 3 2-3z" fill="#e0731d"/></svg></div>
            <div class="pm"><svg width="10" height="10" viewBox="0 0 10 10"><path d="M0 5h10M5 0v10" stroke="#666" stroke-width="2.400"/></svg><hr><svg width="10" height="10" viewBox="0 0 10 10"><path d="M0 5h10" stroke="#666" stroke-width="2.400"/></svg></div>
          </div>
          <div class="glogo"><i>G</i><i>o</i><i>o</i><i>g</i><i>l</i><i>e</i></div>
          <div class="attr"><span>Données cartographiques ©2018 Google</span><span>Conditions d'utilisation</span></div>
        </section>
        <section class="pair">
          <div class="card duo"><svg class="left" width="29" height="24"><use href="#briefcase"/></svg><div class="split"><div><b>16</b><span>PROJECT</span></div><div><b>2</b><span>ACTIVE</span></div></div></div>
          <div class="card duo"><svg class="right" width="31" height="29"><use href="#users"/></svg><div class="split"><div><b>100</b><span>FRIENDS</span></div><div><b class="ok">90%</b><span>ACTIVE</span></div></div></div>
        </section>
      </main>
    </div>
  </div>
  <div class="scroll"><svg viewBox="0 0 17 17"><path d="M4.500 11l4-4.500 4 4.500z" fill="#a3a3a3"/></svg><div class="thumb"></div><svg viewBox="0 0 17 17"><path d="M4.500 6.500l4 4.500 4-4.500z" fill="#505050"/></svg></div>
</div>
<div class="taskbar"><span></span></div>
</body>
</html>
```

FILE: styles.css
```css
* { box-sizing: border-box; }
body { margin: 0; width: 1920px; height: 1080px; overflow: hidden; display: flex; flex-direction: column; font-family: "Open Sans", "Noto Sans", sans-serif; color: #575757; background: #fff; }
svg { display: block; flex: none; fill: currentColor; }
h3, h5, h6, p { margin: 0; font-weight: 400; }
.sprite { position: absolute; width: 0; height: 0; }

/* browser frame */
.browser { flex: none; height: 66px; color: #111; font-size: 12px; letter-spacing: -.45px; }
.tabs { height: 29px; display: flex; padding-left: 6px; background: #ccc; border-bottom: 1px solid #9a9a9a; }
.tab { position: relative; width: 193px; height: 29px; display: flex; align-items: center; padding: 0 5px 0 16px; }
.tab .shape { position: absolute; left: 0; top: 0; width: 206px; height: 29px; fill: #d0d0d0; stroke: #999; }
.tab.active { z-index: 1; }
.tab.active .shape { fill: #f2f2f2; }
.tab > :not(.shape) { position: relative; }
.fav { width: 16px; height: 16px; margin-right: 5px; }
.pma { font: italic bold 7px "Liberation Sans", sans-serif; fill: #33366e; letter-spacing: 0; }
.tab-title { width: 141px; white-space: nowrap; }
.tab-title.fade { color: transparent; background: linear-gradient(90deg, #111 105px, #bbb 136px); -webkit-background-clip: text; background-clip: text; }
.tab-title.short { width: 118px; }
.tab-title.short.fade { background-image: linear-gradient(90deg, #111 92px, #999 114px); }
.speaker { width: 10px; height: 10px; margin: 0 1px 0 7px; }
.x { width: 10px; height: 10px; margin-left: 7px; }
.tab .short ~ .x { margin-left: 5px; }
.newtab { width: 36px; height: 18px; margin: 7px 0 0 9px; fill: #d2d2d2; stroke: #999; }
.winctl { margin-left: auto; display: flex; align-items: center; height: 27px; padding-right: 17px; gap: 36px; }
.winctl svg:first-child { margin-right: -2px; }
.toolbar { height: 37px; display: flex; align-items: center; background: #f2f2f2; border-bottom: 1px solid #b5b5b5; padding-left: 10px; }
.tb { width: 16px; height: 16px; margin-right: 13px; }
.tb:nth-child(3) { margin-right: 10px; margin-left: -2px; }
.omnibox { width: 1764px; height: 28px; background: #fff; border: 1px solid #a6a6a6; border-radius: 3px; display: flex; align-items: center; padding: 0 6px; gap: 11px; }
.url { flex: 1; font-size: 13px; letter-spacing: .15px; margin-left: -5px; color: #000; }
.url i { font-style: normal; color: #7b7b7b; }
.jb { width: 14px; height: 14px; margin-left: 9px; background: #111; color: #fff; font: bold 8px/9px "Liberation Sans", sans-serif; padding-left: 2px; letter-spacing: 0; }
.jb::after { content: ""; display: block; width: 6px; height: 1px; background: #fff; margin-top: 1px; }
.dots { margin-left: 21px; color: #5a5a5a; }

/* page shell */
.viewport { flex: none; height: 1012px; display: flex; }
.page { width: 1903px; overflow: hidden; background: #f4f6f8; }
.top { position: relative; z-index: 3; height: 66px; display: flex; background: #fff; box-shadow: 0 2px 5px rgba(0,0,0,.03); }
.brand { width: 220px; display: flex; align-items: center; padding: 5px 0 0 49px; color: #343a40; font-size: 19px; font-weight: 700; letter-spacing: -.65px; gap: 4px; }
.brand span { margin-top: -3px; }
.top-inner { width: 1152px; margin-left: 266px; display: flex; justify-content: space-between; align-items: center; color: #171717; }
.ic { width: 14px; height: 14px; }
.tools { display: flex; gap: 24px; padding-left: 10px; }
.account { position: relative; display: flex; align-items: center; padding-right: 10px; }
.who { font-size: 13px; font-weight: 600; letter-spacing: 0; margin-right: 9px; }
.chev { width: 9px; height: 6px; }
.bell { width: 44px; height: 34px; margin: 0 25px 0 33px; border-radius: 17px; background: #d8dde0; display: grid; place-items: center; }
.tasks { width: 15px; height: 12px; }
.menu { position: absolute; right: 41px; top: 35px; width: 300px; height: 182px; padding: 8px; background: #fff; border: 1px solid #e6e8ea; display: flex; flex-direction: column; }
.menu h5 { height: 37px; line-height: 36px; text-align: center; font-size: 14px; letter-spacing: .8px; color: #222; border-bottom: 1px solid #e6e8ea; }
.note { height: 89px; padding: 11px 6px 0 7px; display: flex; gap: 18px; border-bottom: 1px solid #e6e8ea; font-size: 13px; line-height: 21px; }
.note svg { margin-top: 2px; }
.note p { color: #212529; font-weight: 600; letter-spacing: 0; }
.note em { color: #868e96; letter-spacing: .4px; }
.viewall { flex: 1; display: flex; align-items: center; justify-content: center; gap: 8px; font-size: 13.500px; letter-spacing: -.1px; padding-top: 8px; color: #575757; }

/* sidebar */
.body { display: flex; height: 946px; }
.side { width: 220px; background: #fff; }
.me { height: 136px; background: #fbfbfb; padding-top: 18px; display: flex; flex-direction: column; align-items: center; }
.me-row { width: 104px; display: flex; align-items: center; margin-top: 12px; color: #343a40; font-size: 13px; letter-spacing: .2px; }
.me-row span { width: 50px; }
.drop { width: 9px; height: 13px; margin-left: 14px; }
.out { width: 14px; height: 12px; margin-left: 13px; }
.nav { padding: 18px 0 0 18px; font-size: 12.500px; letter-spacing: -.38px; color: #6b6b6b; }
.nav a { height: 36px; display: flex; align-items: center; }
.nav a svg { width: 14px; height: 14px; margin-right: 8px; color: #343a40; }
.nav a .solo { margin: 0 10px 0 -2px; }
.nav a .wide { width: 16px; margin-right: 6px; }
.nav h6 { font-size: 12px; letter-spacing: -.15px; color: #a9a9a9; line-height: 16px; padding: 26px 0 6px; }

/* dashboard */
.main { width: 1152px; margin: 24px 0 0 266px; display: flex; flex-direction: column; gap: 6px; }
.main > section { flex: none; }
.card { background: #fff; box-shadow: 0 1px 1px #e4e7ea; }
.stats { display: grid; grid-template-columns: 283px 284px 284px 1fr; gap: 6px; height: 94px; }
.stat { display: flex; align-items: center; padding: 2px 19px 0 17px; }
.stat > svg, .duo > svg { color: #e9eaec; }
.stat div { margin-left: auto; text-align: right; padding-top: 3px; }
.card b { display: block; font-size: 24px; line-height: 30px; font-weight: 600; letter-spacing: -.4px; color: #575757; }
.card span { font-size: 13px; font-weight: 600; letter-spacing: .5px; color: #8d959d; }
.stat div span { display: block; line-height: 20px; margin-top: 3px; margin-right: -1px; }
.tiles { display: grid; grid-template-columns: repeat(6, 1fr); gap: 6px; height: 123px; }
.tile { position: relative; display: flex; flex-direction: column; align-items: center; padding: 23px 1px 0 0; }
.tile svg { width: 42px; height: 42px; }
.tile .w46 { width: 46px; }
.tile p { margin-top: 19px; font-size: 14px; line-height: 20px; font-weight: 600; letter-spacing: -.3px; }
.tile .ribbon { position: absolute; left: 0; top: 10px; height: 32px; padding: 0 18px 0 11px; line-height: 32px; color: #fff; font-weight: 700; font-size: 13px; letter-spacing: -.3px; clip-path: polygon(0 0, 100% 0, calc(100% - 8px) 50%, 100% 100%, 0 100%); }
.green { background: #9ccc65; width: 43px; }
.blue { background: #42a5f5; width: 37px; }
.map-head { height: 56px; display: flex; align-items: center; justify-content: space-between; padding: 0 23px 0 18px; }
.map-head h3 { font-size: 16px; letter-spacing: -.15px; color: #343a40; }
.map-head svg { width: 14px; height: 14px; color: #868e96; }
.map { position: relative; height: 500px; overflow: hidden; font-family: Roboto, "Liberation Sans", sans-serif; }
.shields path { fill: #689f40; }
.shields text { font: 700 26px Roboto, sans-serif; fill: #fff; text-anchor: middle; }
.names text { font: 32px Roboto, sans-serif; fill: #616161; stroke: #fff; stroke-width: 6px; stroke-opacity: .85; stroke-linejoin: round; paint-order: stroke; text-anchor: middle; letter-spacing: .6px; }
.names .m { font-size: 35px; }
.names .g { font-size: 38px; }
.names .l { font-size: 39px; fill: #444; }
.names .xl { font-size: 44px; font-weight: 500; fill: #222; }
.names .park text { fill: #2f8a3d; font-size: 38px; }
.maptype, .fs, .zoom, .glogo, .attr { position: absolute; }
.maptype, .fs, .peg, .pm { background: #fff; border-radius: 2px; box-shadow: 0 1px 3px rgba(0,0,0,.25); }
.maptype { left: 10px; top: 10px; width: 93px; height: 29px; display: flex; align-items: center; font-size: 11px; color: #555; }
.maptype b { width: 38px; line-height: 29px; text-align: center; font-weight: 500; color: #000; border-right: 1px solid #e8e8e8; }
.maptype span { flex: 1; text-align: center; }
.fs { left: 1113px; top: 10px; width: 25px; height: 25px; display: grid; place-items: center; }
.zoom { right: 10px; top: 383px; width: 28px; display: flex; flex-direction: column; gap: 10px; }
.peg { height: 28px; display: grid; place-items: center; }
.pm { height: 55px; display: flex; flex-direction: column; align-items: center; justify-content: space-evenly; }
.pm hr { width: 20px; height: 1px; margin: 0; border: 0; background: #e4e4e4; }
.glogo { left: 6px; bottom: 1px; display: flex; font: 500 22px/26px Lato, sans-serif; letter-spacing: -1.100px; text-shadow: 0 0 2px #fff; }
.glogo i { font-style: normal; color: #4285f4; -webkit-text-stroke: .5px currentColor; }
.glogo i:nth-child(2), .glogo i:nth-child(6) { color: #ea4335; }
.glogo i:nth-child(3) { color: #fbbc05; }
.glogo i:nth-child(5) { color: #34a853; }
.attr { right: 0; bottom: 0; display: flex; gap: 1px; font-size: 10px; line-height: 14px; color: #444; }
.attr span { background: #deedf8; padding: 0 6px 0 5px; }

.pair { display: grid; grid-template-columns: 1fr 1fr; gap: 6px; height: 150px; }
.duo { padding-top: 17px; }
.duo .left { margin-left: 17px; }
.duo .right { margin: 0 18px 0 auto; }
.split { display: grid; grid-template-columns: 286px 1fr; margin-top: 20px; }
.duo .left + .split { margin-top: 25px; }
.split div { height: 80px; padding: 6px 15px; }
.split div:first-child { text-align: right; border-right: 1px solid #e4e7ea; }
.split span { display: block; line-height: 20px; margin-top: 3px; }
.card .ok { color: #9ccc65; }

.scroll { width: 17px; background: #f1f1f1; display: flex; flex-direction: column; }
.scroll svg { width: 17px; height: 17px; }
.thumb { height: 734px; margin: 0 2px auto; background: #c1c1c1; }
.taskbar { height: 2px; background: #000; padding-left: 492px; }
.taskbar span { display: block; width: 48px; height: 2px; background: #333; }
```
